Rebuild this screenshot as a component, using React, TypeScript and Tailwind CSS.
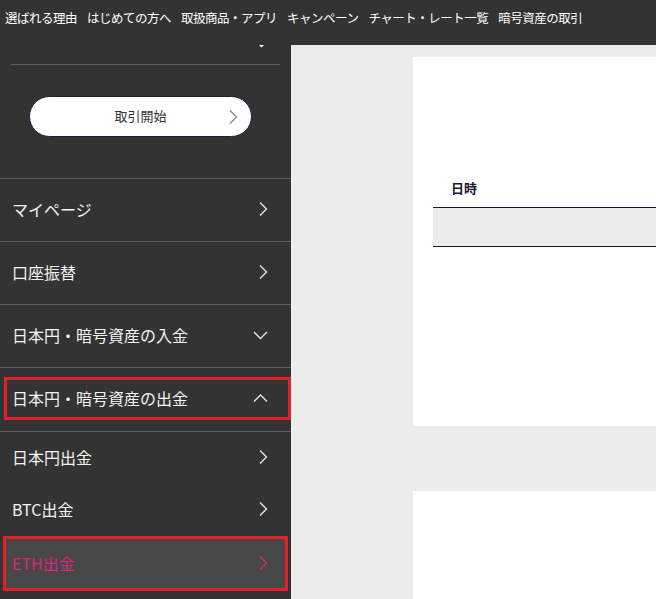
import React from "react";

const font = "font-['Noto_Sans_CJK_JP','Noto_Sans',sans-serif]";

function Chevron({ dir, color = "#e6e6e6" }: { dir: "right" | "down" | "up"; color?: string }) {
  if (dir === "right") {
    return (
      <svg width="10" height="16" viewBox="0 0 10 16" fill="none">
        <polyline points="2,1.5 8.5,8 2,14.5" stroke={color} strokeWidth="1.4" />
      </svg>
    );
  }
  const pts = dir === "down" ? "1,2 7.5,8.5 14,2" : "1,8.5 7.5,2 14,8.5";
  return (
    <svg width="15" height="10" viewBox="0 0 15 10" fill="none">
      <polyline points={pts} stroke={color} strokeWidth="1.4" />
    </svg>
  );
}

const navItems = ["選ばれる理由", "はじめての方へ", "取扱商品・アプリ", "キャンペーン", "チャート・レート一覧", "暗号資産の取引"];

function MenuRow({ label, icon }: { label: string; icon: "right" | "down" }) {
  return (
    <div className="h-[63px] border-t border-[#5e5e5e] flex items-center justify-between pl-[12px] pr-[23px] pb-[2px] text-[16px] text-[#f2f2f2]">
      <span>{label}</span>
      <Chevron dir={icon} />
    </div>
  );
}

function SubRow({ label }: { label: string }) {
  return (
    <div className="h-[52px] flex items-center justify-between pl-[12px] pr-[23px] pb-[2px] text-[16px] text-[#f2f2f2]">
      <span>{label}</span>
      <Chevron dir="right" />
    </div>
  );
}

export default function App() {
  return (
    <div className={`w-[656px] h-[599px] overflow-hidden flex flex-col bg-[#ececec] ${font}`}>
      {/* top nav */}
      <div className="h-[45px] shrink-0 bg-[#333333] flex gap-[10px] pl-[5px] pt-[9px] text-[12.5px] leading-[18px] tracking-[-0.5px] text-white whitespace-nowrap overflow-hidden">
        {navItems.map((n) => (
          <span key={n}>{n}</span>
        ))}
      </div>

      <div className="flex flex-1 min-h-0">
        {/* sidebar */}
        <aside className="w-[291px] shrink-0 bg-[#333333] overflow-hidden">
          <div className="h-[19px] relative">
            <div className="absolute left-[254px] -top-[7px]">
              <Chevron dir="down" color="#ffffff" />
            </div>
          </div>
          <div className="mx-[11px] border-t border-[#5e5e5e]" />
          <div className="pt-[31px] pb-[41px]">
            <button className="ml-[29px] w-[223px] h-[41px] rounded-full bg-white border border-[#1b1b3a] relative flex items-center justify-center pb-[1px] text-[13px] text-[#333]">
              取引開始
              <span className="absolute right-[13px] top-1/2 -translate-y-1/2">
                <Chevron dir="right" color="#8a8a8a" />
              </span>
            </button>
          </div>

          <MenuRow label="マイページ" icon="right" />
          <MenuRow label="口座振替" icon="right" />
          <MenuRow label="日本円・暗号資産の入金" icon="down" />

          <div className="border-t border-[#5e5e5e] pt-[9px] pb-[11px] pl-[4px]">
            <div className="h-[43px] border-[3px] border-[#e3202b] flex items-center justify-between pl-[5px] pr-[20px] pb-[2px] text-[16px] text-[#f2f2f2]">
              <span>日本円・暗号資産の出金</span>
              <Chevron dir="up" />
            </div>
          </div>

          <div className="border-t border-[#5e5e5e]">
            <SubRow label="日本円出金" />
            <SubRow label="BTC出金" />
            <div className="pl-[3px] pr-[3px]">
              <div className="h-[55px] border-[3px] border-[#e3202b] bg-[#474747] flex items-center justify-between pl-[6px] pr-[17px] pb-[2px] text-[16px] text-[#d9267f]">
                <span>ETH出金</span>
                <Chevron dir="right" color="#d9267f" />
              </div>
            </div>
          </div>
        </aside>

        {/* main */}
        <main className="flex-1 min-w-0 overflow-hidden pl-[122px] pt-[12px]">
          <div className="bg-white h-[369px] pt-[111px] pl-[20px]">
            <div className="h-[40px] border-b border-[#15153a] flex items-center pl-[18px] text-[13px] font-bold text-[#1a1a2e]">
              日時
            </div>
            <div className="h-[39px] bg-[#ececec] border-b border-[#15153a]" />
          </div>
          <div className="bg-white h-[200px] mt-[65px]" />
        </main>
      </div>
    </div>
  );
}
